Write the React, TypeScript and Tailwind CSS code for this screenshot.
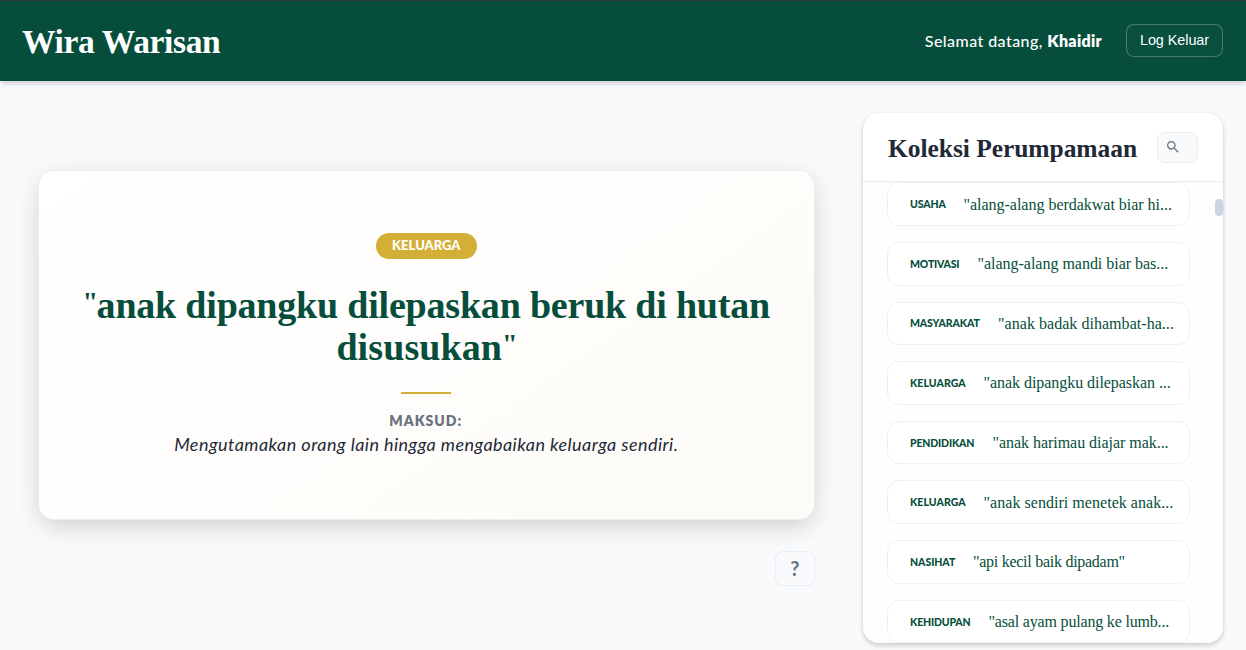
import { MdSearch } from "react-icons/md";

const proverbs = [
  { tag: "USAHA", tagClass: "w-[53.5px] tracking-[-0.14px]", text: '"alang-alang berdakwat biar hi...', textClass: "tracking-[-0.02px]" },
  { tag: "MOTIVASI", tagClass: "w-[67.5px] tracking-[-0.2px]", text: '"alang-alang mandi biar bas...', textClass: "tracking-[-0.02px]" },
  { tag: "MASYARAKAT", tagClass: "w-[88px] tracking-[-0.12px]", text: '"anak badak dihambat-ha...', textClass: "tracking-[0.04px]" },
  { tag: "KELUARGA", tagClass: "w-[73.5px] tracking-[0.07px]", text: '"anak dipangku dilepaskan ...', textClass: "tracking-[-0.05px]" },
  { tag: "PENDIDIKAN", tagClass: "w-[82.5px] tracking-[-0.16px]", text: '"anak harimau diajar mak...', textClass: "tracking-[-0.04px]" },
  { tag: "KELUARGA", tagClass: "w-[73.5px] tracking-[0.07px]", text: '"anak sendiri menetek anak...', textClass: "tracking-[0.04px]" },
  { tag: "NASIHAT", tagClass: "w-[63px] tracking-[-0.05px]", text: '"api kecil baik dipadam"', textClass: "tracking-[-0.27px]" },
  { tag: "KEHIDUPAN", tagClass: "w-[78.5px] tracking-[-0.17px]", text: '"asal ayam pulang ke lumb...', textClass: "tracking-[-0.18px]" },
];

function Header() {
  return (
    <header className="relative flex h-[80.5px] shrink-0 items-center justify-between border-t border-[#2f3b36] bg-[#064e3b] pr-[23px] pl-[22px] text-white shadow-[0_4px_6px_-1px_rgba(0,0,0,0.12),0_2px_4px_-1px_rgba(0,0,0,0.08)]">
      <h1 className="pt-[3px] font-['Liberation_Serif',serif] text-[33.5px] leading-[40px] font-bold tracking-[-0.35px] whitespace-nowrap">
        Wira Warisan
      </h1>
      <div className="flex items-center gap-6">
        <p className="flex gap-[4.5px] text-base whitespace-nowrap">
          <span className="font-medium tracking-[0.43px]">Selamat datang,</span>
          <strong className="font-extrabold tracking-[0.3px]">Khaidir</strong>
        </p>
        <button className="h-[33px] w-[97px] rounded-lg border border-white/25 bg-white/[0.01] font-['Liberation_Sans',sans-serif] text-[14.4px] tracking-[-0.05px] whitespace-nowrap">
          Log Keluar
        </button>
      </div>
    </header>
  );
}

function QuoteMark() {
  return <span className="inline-block -translate-y-[7px] text-[28px] leading-none tracking-[-1.5px]">"</span>;
}

function ProverbCard() {
  return (
    <article className="flex h-[350px] flex-col items-center rounded-2xl border border-black/5 bg-linear-145 from-white to-[#fdfbf7] bg-clip-padding pt-[62px] shadow-[0_10px_25px_-5px_rgba(0,0,0,0.13),0_4px_30px_rgba(0,0,0,0.07)]">
      <span className="flex h-[26px] w-[101px] items-center justify-center rounded-full bg-[#d4af37] pt-px text-[13px] font-black text-white">
        KELUARGA
      </span>
      <h2 className="mt-[25px] text-center font-['Liberation_Serif',serif] text-[38px] leading-[42px] font-bold whitespace-nowrap text-[#064e3b]">
        <span className="block h-[42px] tracking-[-0.2px]">
          <QuoteMark />
          anak dipangku dilepaskan beruk di hutan
        </span>
        <span className="block h-[42px] tracking-[0.1px]">
          disusukan
          <QuoteMark />
        </span>
      </h2>
      <div className="mt-6 mr-px h-0.5 w-[50px] bg-[#d4af37]" />
      <p className="mt-[17px] mr-px text-sm leading-5 font-extrabold tracking-[1px] text-[#6b7280]">MAKSUD:</p>
      <p className="mt-px text-[18px] leading-6 tracking-[0.44px] whitespace-nowrap text-[#1f2937] italic">
        Mengutamakan orang lain hingga mengabaikan keluarga sendiri.
      </p>
    </article>
  );
}

function Collection() {
  return (
    <aside className="flex h-[530px] w-[359.5px] flex-col overflow-hidden rounded-2xl bg-white shadow-[0_4px_6px_-1px_rgba(0,0,0,0.12),0_1px_4px_rgba(0,0,0,0.12)]">
      <div className="flex h-[69px] shrink-0 items-center justify-between border-b border-[#e8ecf0] pr-[24.5px] pl-[25px]">
        <h2 className="pt-[3px] font-['Liberation_Serif',serif] text-[25.5px] leading-8 font-bold tracking-[-0.05px] whitespace-nowrap text-[#1f2937]">
          Koleksi Perumpamaan
        </h2>
        <button aria-label="Cari" className="flex h-[31px] w-[41.5px] items-center rounded-lg border border-[#e9eef5] bg-[#f8fafc] pl-[7.5px] text-[#6b7280]">
          <MdSearch size={16} />
        </button>
      </div>
      <div className="flex min-h-0 flex-1 justify-between overflow-hidden bg-[#fefefe]">
        <ul className="flex w-[327px] flex-col gap-4 pt-[0.2px] pl-[24px]">
          {proverbs.map((p, i) => (
            <li key={i} className="flex h-[43.67px] shrink-0 items-center rounded-xl border border-[#edf0f6] bg-white pl-[22px] whitespace-nowrap text-[#064e3b]">
              <span className={`shrink-0 text-[10.5px] leading-4 font-black ${p.tagClass}`}>{p.tag}</span>
              <span className={`pt-px font-['Liberation_Serif',serif] text-base leading-5 ${p.textClass}`}>{p.text}</span>
            </li>
          ))}
        </ul>
        <div className="mt-[17px] h-[17px] w-2 rounded-full bg-[#cbd5e1]" />
      </div>
    </aside>
  );
}

export default function App() {
  return (
    <div className="flex h-[650px] w-[1246px] flex-col overflow-hidden bg-[#f8fafc] font-[Lato,sans-serif]">
      <Header />
      <main className="flex min-h-0 flex-1 justify-between pt-[32.5px] pr-[23.5px] pl-[38px]">
        <section className="flex w-[776.5px] flex-col pt-[56.6px]">
          <ProverbCard />
          <button className="mt-[31.4px] flex h-[35px] w-[39.5px] items-center justify-center self-end rounded-lg border border-[#e9eef5] bg-[#f9fafc] pb-px text-[20px] font-bold text-[#6b7280]">
            ?
          </button>
        </section>
        <Collection />
      </main>
    </div>
  );
}
